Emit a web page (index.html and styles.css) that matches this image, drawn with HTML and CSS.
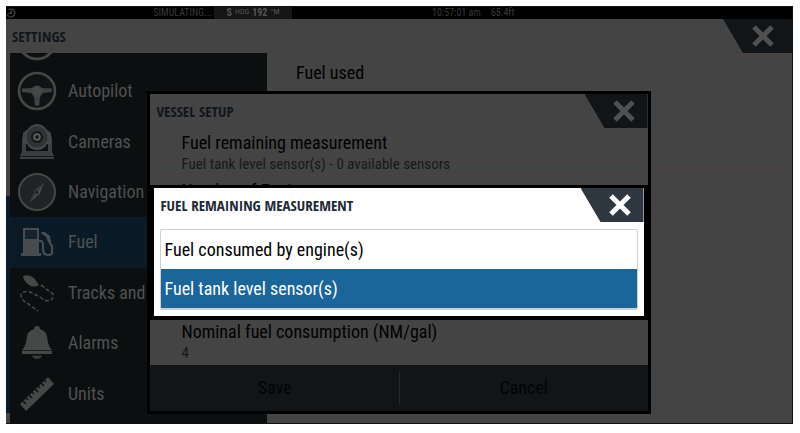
FILE: index.html
```html
<!DOCTYPE html>
<html lang="en">
<head>
    <meta charset="UTF-8">
    <meta name="viewport" content="width=device-width, initial-scale=1.0">
    <title>Settings</title>
    <link rel="stylesheet" href="styles.css">
</head>
<body>
    <div class="screen">
        <div class="status">
            <div class="status-left">
                <svg class="power" viewBox="0 0 10 10"><path d="M2.5 1.8A4 4 0 1 1 1.2 6.5M5 2.5V5.4H2.6" fill="none" stroke="#444" stroke-width="1.2"/></svg>
                <span>SIMULATING...</span>
            </div>
            <div class="heading"><b>S</b><sup>HDG</sup><b>192</b><sup>°M</sup></div>
            <div class="status-right"><span>10:57:01 am</span><span>65.4ft</span></div>
        </div>

        <div class="title-bar">
            <h1>SETTINGS</h1>
            <button type="button" class="close" aria-label="Close settings">
                <svg viewBox="0 0 22 22"><path d="M2 2L20 20M20 2L2 20"/></svg>
            </button>
        </div>

        <div class="main">
            <div class="edge"></div>
            <nav class="menu">
                <div class="menu-cut">
                    <svg viewBox="0 0 40 40"><circle cx="20" cy="20" r="18" fill="none" stroke="#464848" stroke-width="3"/></svg>
                </div>
                <a href="#autopilot">
                    <svg viewBox="0 0 40 40">
                        <circle cx="20" cy="20" r="18" fill="#101314" stroke="#464848" stroke-width="2.6"/>
                        <path d="M5 17.5L15 17Q20 12 25 17L35 17.5V21L26 22Q23.5 24 22.8 27L22.2 34.5H17.8L17.2 27Q16.5 24 14 22L5 21Z" fill="#3f4142"/>
                        <circle cx="20" cy="20" r="5" fill="#464848"/>
                    </svg>
                    <span>Autopilot</span>
                </a>
                <a href="#cameras">
                    <svg viewBox="0 0 40 40">
                        <path d="M8 13Q5 13 5 18V30L3 34V37H37V34L35 30V18Q35 13 32 13Z" fill="#3d3f40"/>
                        <path d="M9 20V31H31V20Z" fill="#0c0f10"/>
                        <path d="M8 29H32L34 33H6Z" fill="#3a3c3d"/>
                        <path d="M3 34.5H37" stroke="#15181a"/>
                        <path d="M6 11Q8 9 10 8Q14 2 20 2T30 8Q32 9 34 11V22H30Q27 28 20 28T10 22H6Z" fill="#444647"/>
                        <circle cx="20" cy="15" r="10.5" fill="#303334"/>
                        <circle cx="20" cy="15" r="6" fill="#151819"/>
                        <circle cx="20" cy="15" r="3.8" fill="#5a5c5c"/>
                        <circle cx="20" cy="15" r="1.8" fill="#111"/>
                    </svg>
                    <span>Cameras</span>
                </a>
                <a href="#navigation">
                    <svg viewBox="0 0 40 40">
                        <circle cx="20" cy="20" r="18" fill="#202325" stroke="#464848" stroke-width="2"/>
                        <path d="M27 11L22.5 22L13 30L18 18.5Z" fill="#4b4d4e"/>
                        <path d="M27 11L20.5 20.5L13 30L18 18.5Z" fill="#353839"/>
                        <circle cx="20" cy="20.5" r="1.4" fill="#181b1c"/>
                    </svg>
                    <span>Navigation</span>
                </a>
                <a href="#fuel" class="active">
                    <svg viewBox="0 0 40 40">
                        <path d="M6 7Q6 6 7 6H21Q22 6 22 7V31H24V34H4V31H6Z" fill="#494c4e"/>
                        <path d="M8 8H20V17H8Z" fill="#14232e"/>
                        <path d="M22 19Q26 18 26 23V27Q26 33 31 33T35 29V24Q32 21 32 17" fill="none" stroke="#494c4e" stroke-width="2.2"/>
                        <path d="M24 10L28 10L33 14L34 20H31L29 15L25 12Z" fill="#494c4e"/>
                    </svg>
                    <span>Fuel</span>
                </a>
                <a href="#tracks">
                    <svg viewBox="0 0 40 40">
                        <path d="M6 3Q12 1 17 5L22 12Q17 15 12 12Q7 9 6 3Z" fill="#464848"/>
                        <path d="M24 12L36 21Q37 26 32 28Q28 28 23 24L13 19Q6 17 4 22Q4 27 10 30L21 38" fill="none" stroke="#464848" stroke-width="1.6" stroke-dasharray="4 2"/>
                    </svg>
                    <span>Tracks and</span>
                </a>
                <a href="#alarms">
                    <svg viewBox="0 0 40 40">
                        <path d="M17 6Q17 3 20 3T23 6Q30 8 30.500 16Q31 23 35 27V31H5V27Q9 23 9.5 16Q10 8 17 6Z" fill="#464848"/>
                        <path d="M5 27.5H35" stroke="#1d2021" stroke-width="1"/>
                        <path d="M15 32.5H25Q24 36 20 36T15 32.5Z" fill="#393b3c"/>
                    </svg>
                    <span>Alarms</span>
                </a>
                <a href="#units">
                    <svg viewBox="0 0 40 40">
                        <path d="M3 30L31 3L37 10L9 37Z" fill="#464848"/>
                        <path d="M6 27L9 30M9 24L11 26M12 21L15 24M15 18L17 20M18 15L21 18M21 12L23 14M24 9L27 12M27 6L29 8" stroke="#0c0f10" stroke-width="1.5"/>
                    </svg>
                    <span>Units</span>
                </a>
            </nav>
            <div class="content">
                <div class="item">Fuel used</div>
                <div class="item"></div>
                <div class="item strong"></div>
                <div class="item"></div>
            </div>
        </div>

        <div class="overlay">
            <section class="vessel">
                <div class="title-bar">
                    <h2>VESSEL SETUP</h2>
                    <button type="button" class="close" aria-label="Close vessel setup">
                        <svg viewBox="0 0 22 22"><path d="M2 2L20 20M20 2L2 20"/></svg>
                    </button>
                </div>
                <div class="field">
                    <div class="name">Fuel remaining measurement</div>
                    <div class="value">Fuel tank level sensor(s) - 0 available sensors</div>
                </div>
                <div class="field grow">
                    <div class="name">Number of Engines</div>
                </div>
                <div class="field">
                    <div class="name">Nominal fuel consumption (NM/gal)</div>
                    <div class="value">4</div>
                </div>
                <div class="buttons">
                    <button type="button">Save</button>
                    <button type="button">Cancel</button>
                </div>

                <div class="picker-wrap">
                    <section class="picker">
                        <div class="title-bar">
                            <h2>FUEL REMAINING MEASUREMENT</h2>
                            <button type="button" class="close" aria-label="Close fuel remaining measurement">
                                <svg viewBox="0 0 22 22"><path d="M2 2L20 20M20 2L2 20"/></svg>
                            </button>
                        </div>
                        <div class="options">
                            <button type="button">Fuel consumed by engine(s)</button>
                            <button type="button" class="selected">Fuel tank level sensor(s)</button>
                        </div>
                    </section>
                </div>
            </section>
        </div>
    </div>
</body>
</html>
```
FILE: styles.css
```css
*{
    margin: 0;
    padding: 0;
    box-sizing: border-box;
}
body{
    min-height: 100vh;
    padding: 6px 7px 9px 6px;
    display: flex;
    background-color: #fff;
    font-family: "Roboto Condensed", "Open Sans", sans-serif;
    font-size: 18px;
    line-height: 24px;
    color: #000;
}
button{
    border: none;
    background: none;
    font: inherit;
    color: inherit;
}
.screen{
    flex: 1;
    position: relative;
    display: flex;
    flex-direction: column;
    border: 1px solid #111;
    border-left: none;
    background-color: #444;
}
/* top status strip */
.status{
    height: 12px;
    display: grid;
    grid-template-columns: 208px 78px 1fr;
    background-color: #000;
    color: #3a3a3a;
    font-size: 10px;
    line-height: 12px;
}
.status-left{
    display: flex;
    justify-content: space-between;
    align-items: center;
    padding-right: 2px;
}
.power{
    width: 10px;
    height: 10px;
}
.heading{
    display: flex;
    justify-content: center;
    gap: 3px;
    background-color: #161616;
    color: #555;
}
.heading sup{
    font-size: 8px;
    line-height: 10px;
}
.status-right{
    display: flex;
    gap: 10px;
    padding-left: 140px;
}
/* title bars */
.title-bar{
    height: 34px;
    display: flex;
    justify-content: space-between;
    align-items: center;
    padding-left: 6px;
    color: #11161d;
}
h1,h2{
    font-family: "Open Sans Condensed", "Open Sans", sans-serif;
    font-size: 15px;
    line-height: 20px;
    font-weight: 700;
}
.close{
    width: 63px;
    height: 34px;
    display: flex;
    justify-content: center;
    align-items: center;
    padding-left: 16px;
    background-color: #111518;
    clip-path: polygon(0 0,100% 0,100% 100%,20px 100%);
}
.close svg{
    width: 22px;
    height: 22px;
    fill: none;
    stroke: #505050;
    stroke-width: 5;
}
.screen > .title-bar .close{
    width: 69px;
    padding-left: 10px;
}
/* settings page */
.main{
    flex: 1;
    display: grid;
    grid-template-columns: 4px 257px 1fr;
}
.edge{
    background: linear-gradient(#444 143px, #0b1b27 143px calc(100% - 10px), #444 calc(100% - 10px));
}
.menu{
    display: flex;
    flex-direction: column;
    padding-bottom: 4px;
    background-color: #0c0f10;
    color: #4f5152;
}
.menu svg{
    width: 40px;
    height: 40px;
    display: block;
}
.menu-cut{
    height: 13px;
    display: flex;
    align-items: flex-end;
    overflow: hidden;
    padding: 0 7px 5px;
}
.menu a{
    flex: 1;
    display: flex;
    align-items: center;
    gap: 11px;
    min-height: 50px;
    padding-left: 7px;
    color: inherit;
    text-decoration: none;
}
.menu .active{
    background-color: #0a1a26;
}
.content{
    padding: 0 5px;
    border-top: 1px solid #4c4040;
}
.item{
    height: 39px;
    padding: 7px 24px;
    border-bottom: 1px solid #4c4040;
}
.strong{
    border-bottom-color: #543c3c;
}
/* vessel setup dialog */
.overlay{
    position: absolute;
    inset: 84px 0 9px;
    display: flex;
    justify-content: center;
}
.vessel{
    position: relative;
    width: 64%;
    display: flex;
    flex-direction: column;
    border: 3px solid #000;
    background-color: #444;
}
.field{
    height: 48px;
    margin-left: 6px;
    margin-right: 6px;
    padding: 3px 25px;
    border-bottom: 1px solid #4c4040;
}
.grow{
    flex: 1;
    border-bottom: none;
}
.value{
    font-size: 15px;
    line-height: 18px;
    color: #181818;
}
.buttons{
    height: 46px;
    display: grid;
    grid-template-columns: 1fr 1fr;
    padding: 6px 0;
    background-color: #111518;
    color: #030303;
}
.buttons button + button{
    border-left: 1px solid #23272a;
}
/* measurement picker */
.picker-wrap{
    position: absolute;
    inset: 0;
    display: flex;
    align-items: center;
}
.picker{
    width: 100%;
    border: 4px solid #000;
    border-width: 3px 4px 4px;
    background-color: #fff;
}
.picker .title-bar{
    color: #202a38;
}
.picker .close{
    background-color: #2f3740;
}
.picker .close svg{
    stroke: #fff;
}
.options{
    margin: 7px 6px 6px;
    border: 1px solid #ccd0d4;
    border-bottom-width: 2px;
    border-radius: 2px;
}
.options button{
    display: block;
    width: 100%;
    height: 39px;
    padding-left: 3px;
    text-align: left;
}
.options .selected{
    background-color: #1a6599;
    color: #fff;
}
```
